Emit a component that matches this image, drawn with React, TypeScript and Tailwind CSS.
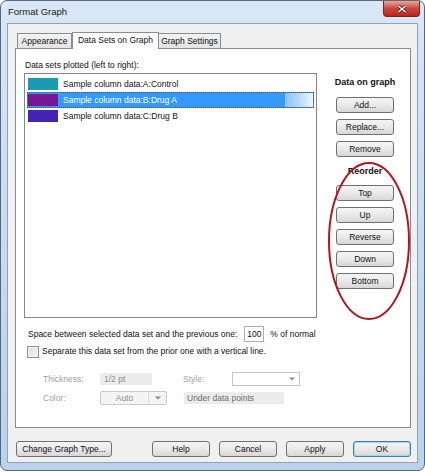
import React from 'react';

const font = { fontFamily: '"Liberation Sans", Arial, sans-serif' };

interface DataSet {
  name: string;
  color: string;
  selected?: boolean;
}

const dataSets: DataSet[] = [
  { name: 'Sample column data:A:Control', color: 'bg-[#1d9ab3]' },
  { name: 'Sample column data:B:Drug A', color: 'bg-[#761896]', selected: true },
  { name: 'Sample column data:C:Drug B', color: 'bg-[#4822b4]' },
];

function WinButton({ label, className = '', focused = false }: { label: string; className?: string; focused?: boolean }) {
  return (
    <button
      className={`h-[16px] rounded-[3px] border ${
        focused ? 'border-[#3c7fb1] shadow-[inset_0_0_0_1px_#9fd5f5]' : 'border-[#707070]'
      } bg-gradient-to-b from-[#f5f5f5] via-[#e9e9e9] to-[#d7d7d7] text-[8.5px] leading-none text-[#111] ${className}`}
    >
      {label}
    </button>
  );
}

function Arrow() {
  return (
    <svg width="6" height="4" viewBox="0 0 6 4">
      <path d="M0 0.5 L6 0.5 L3 3.5 Z" fill="#8a8a8a" />
    </svg>
  );
}

export default function App() {
  return (
    <div className="w-[425px] h-[472px] bg-white" style={font}>
      <div className="w-[425px] h-[471px] rounded-[7px] border border-[#56677c] bg-gradient-to-b from-[#d9e7f6] via-[#c6dbf0] to-[#bad2ec] flex flex-col px-[6px] pb-[7px]">
        {/* title bar */}
        <div className="h-[22px] flex justify-between">
          <div className="pt-[6px] pl-[1px] text-[9.5px] leading-none text-[#1a1a1a]">Format Graph</div>
          <div className="mr-[-2px] mt-[0px] w-[37px] h-[16px] rounded-b-[4px] border border-t-0 border-[#6e2a2a] bg-gradient-to-b from-[#e8a59a] via-[#c8473c] to-[#c01f1f] flex items-center justify-center">
            <svg width="10" height="8" viewBox="0 0 10 8">
              <path d="M1.5 1 L8.5 7 M8.5 1 L1.5 7" stroke="#5b1414" strokeWidth="3" />
              <path d="M1.5 1 L8.5 7 M8.5 1 L1.5 7" stroke="#ffffff" strokeWidth="1.6" />
            </svg>
          </div>
        </div>

        {/* client area */}
        <div className="flex-1 bg-[#f0f0f0] border border-[#8ea2b9] flex flex-col pl-[7px] pr-[6px] pt-[8px]">
          {/* tabs */}
          <div className="flex items-end h-[16px] pl-[2px] text-[8.5px] leading-none text-[#111]">
            <div className="h-[15px] w-[55px] border border-b-0 border-[#898c95] bg-gradient-to-b from-[#f3f3f3] to-[#e3e3e3] flex items-center justify-center">
              Appearance
            </div>
            <div className="relative z-10 mb-[-1px] h-[17px] w-[87px] border border-b-0 border-[#898c95] bg-white flex items-center justify-center pb-[2px]">
              Data Sets on Graph
            </div>
            <div className="h-[15px] w-[62px] border border-b-0 border-l-0 border-[#898c95] bg-gradient-to-b from-[#f3f3f3] to-[#e3e3e3] flex items-center justify-center">
              Graph Settings
            </div>
          </div>

          {/* tab panel */}
          <div className="relative h-[380px] border border-[#898c95] bg-white flex flex-col text-[8.5px] leading-none text-[#111]">
            <div className="flex pt-[12px]">
              <div className="pl-[8px] flex flex-col">
                <div className="h-[10px] pl-[1px]">Data sets plotted (left to right):</div>
                <div className="mt-[2px] w-[293px] h-[245px] border border-[#828790] bg-white px-[2px] pt-[2px]">
                  {dataSets.map((d) => (
                    <div
                      key={d.name}
                      className={`relative h-[16px] flex items-center ${
                        d.selected ? 'bg-[#3399ff] text-white outline-1 outline-dotted outline-[#555] outline-offset-[-1px]' : ''
                      }`}
                    >
                      <div className={`ml-[1px] w-[30px] h-[12px] ${d.color}`} />
                      <span className="ml-[5px]">{d.name}</span>
                      {d.selected && (
                        <div className="ml-auto mr-[1px] w-[28px] h-[14px] bg-gradient-to-r from-[#8cc3f6] via-[#b7d9fa] to-[#eef6ff]" />
                      )}
                    </div>
                  ))}
                </div>
              </div>

              <div className="flex-1 flex flex-col items-center pl-[3px]">
                <div className="mt-[17px] h-[10px] text-[9px] font-bold">Data on graph</div>
                <WinButton label="Add..." className="mt-[9px] w-[58px]" />
                <WinButton label="Replace..." className="mt-[6px] w-[58px]" />
                <WinButton label="Remove" className="mt-[6px] w-[58px]" />
                <div className="mt-[10px] h-[10px] text-[9px] font-bold">Reorder</div>
                <WinButton label="Top" className="mt-[8px] w-[58px]" />
                <WinButton label="Up" className="mt-[6px] w-[58px]" />
                <WinButton label="Reverse" className="mt-[6px] w-[58px]" />
                <WinButton label="Down" className="mt-[6px] w-[58px]" />
                <WinButton label="Bottom" className="mt-[6px] w-[58px]" />
              </div>
            </div>

            {/* spacing row */}
            <div className="mt-[8px] h-[16px] pl-[12px] flex items-center">
              <span>Space between selected data set and the previous one:</span>
              <div className="ml-[7px] w-[20px] h-[16px] border border-[#abadb3] bg-white flex items-center justify-center">100</div>
              <span className="ml-[6px]">% of normal</span>
            </div>

            {/* checkbox row */}
            <div className="mt-[3px] h-[13px] pl-[11px] flex items-center">
              <div className="w-[12px] h-[12px] border border-[#8f8f8f] bg-gradient-to-br from-[#dcdcdc] to-[#f8f8f8] shadow-[inset_0_0_0_1px_#f4f4f4]" />
              <span className="ml-[3px]">Separate this data set from the prior one with a vertical line.</span>
            </div>

            {/* thickness row */}
            <div className="mt-[14px] h-[14px] pl-[27px] flex items-center text-[#a0a0a0]">
              <span className="w-[57px]">Thickness:</span>
              <div className="w-[52px] h-[12px] bg-[#ececec] flex items-center pl-[4px] text-[#8d8d8d]">1/2 pt</div>
              <span className="ml-[31px] w-[49px]">Style:</span>
              <div className="w-[68px] h-[14px] border border-[#c5c5c5] bg-white flex items-center justify-end pr-[4px]">
                <Arrow />
              </div>
            </div>

            {/* color row */}
            <div className="mt-[5px] h-[14px] pl-[27px] flex items-center text-[#a0a0a0]">
              <span className="w-[57px]">Color:</span>
              <div className="w-[67px] h-[14px] border border-[#c8c8c8] rounded-[2px] bg-[#f4f4f4] flex items-center">
                <span className="flex-1 text-center text-[#8d8d8d]">Auto</span>
                <div className="w-[18px] h-full border-l border-[#dcdcdc] flex items-center justify-center">
                  <Arrow />
                </div>
              </div>
              <div className="ml-[17px] w-[100px] h-[12px] bg-[#ececec] flex items-center pl-[3px] text-[#6f6f6f]">Under data points</div>
            </div>

            {/* highlight ellipse */}
            <svg className="absolute left-[305px] top-[107px] pointer-events-none" width="100" height="172" viewBox="0 0 100 172">
              <ellipse cx="48" cy="85" rx="40" ry="78" fill="none" stroke="#b5141c" strokeWidth="2" />
            </svg>
          </div>

          {/* bottom buttons */}
          <div className="mt-[13px] flex">
            <WinButton label="Change Graph Type..." className="ml-[1px] w-[96px]" />
            <div className="ml-auto flex gap-[9px]">
              <WinButton label="Help" className="w-[58px]" />
              <WinButton label="Cancel" className="w-[58px]" />
              <WinButton label="Apply" className="w-[58px]" />
              <WinButton label="OK" className="w-[58px]" focused />
            </div>
          </div>
        </div>
      </div>
    </div>
  );
}
